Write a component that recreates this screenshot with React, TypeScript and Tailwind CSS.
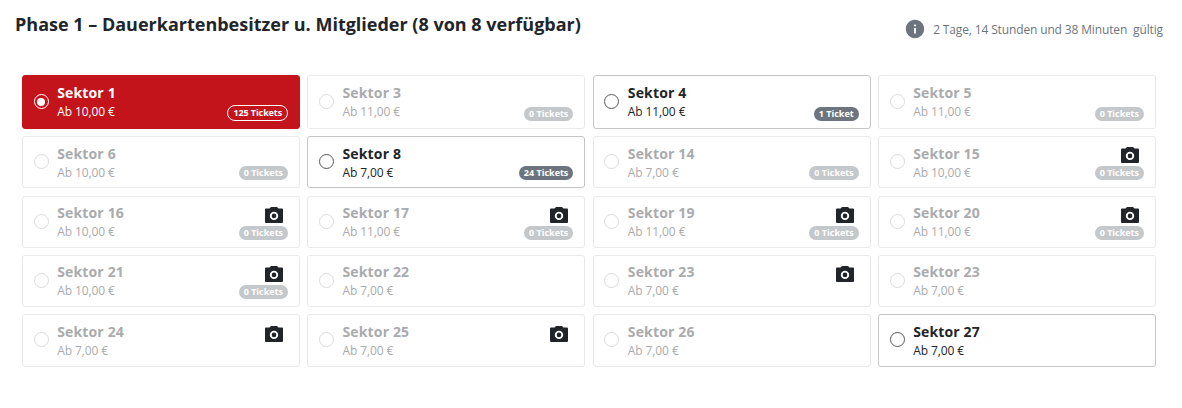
import { MdInfo } from "react-icons/md";
import clsx from "clsx";

type Sector = {
  name: string;
  price: string;
  tickets?: number;
  camera?: boolean;
  available?: boolean;
  selected?: boolean;
};

const SECTORS: Sector[] = [
  { name: "Sektor 1", price: "10,00", tickets: 125, available: true, selected: true },
  { name: "Sektor 3", price: "11,00", tickets: 0 },
  { name: "Sektor 4", price: "11,00", tickets: 1, available: true },
  { name: "Sektor 5", price: "11,00", tickets: 0 },
  { name: "Sektor 6", price: "10,00", tickets: 0 },
  { name: "Sektor 8", price: "7,00", tickets: 24, available: true },
  { name: "Sektor 14", price: "7,00", tickets: 0 },
  { name: "Sektor 15", price: "10,00", tickets: 0, camera: true },
  { name: "Sektor 16", price: "10,00", tickets: 0, camera: true },
  { name: "Sektor 17", price: "11,00", tickets: 0, camera: true },
  { name: "Sektor 19", price: "11,00", tickets: 0, camera: true },
  { name: "Sektor 20", price: "11,00", tickets: 0, camera: true },
  { name: "Sektor 21", price: "10,00", tickets: 0, camera: true },
  { name: "Sektor 22", price: "7,00" },
  { name: "Sektor 23", price: "7,00", camera: true },
  { name: "Sektor 23", price: "7,00" },
  { name: "Sektor 24", price: "7,00", camera: true },
  { name: "Sektor 25", price: "7,00", camera: true },
  { name: "Sektor 26", price: "7,00" },
  { name: "Sektor 27", price: "7,00", available: true },
];

function CameraIcon({ className }: { className?: string }) {
  return (
    <svg viewBox="0 0 18 16" fill="currentColor" className={clsx("h-[16px] w-[18px]", className)}>
      <path
        fillRule="evenodd"
        d="M6 0h6l1.5 1.5H17a1 1 0 0 1 1 1V15a1 1 0 0 1-1 1H1a1 1 0 0 1-1-1V2.5a1 1 0 0 1 1-1h3.5zM9 4.700a4.200 4.200 0 1 0 0 8.400a4.200 4.200 0 0 0 0-8.400z"
      />
      <circle cx="9" cy="8.900" r="2.300" />
    </svg>
  );
}

function Radio({ selected, available }: { selected?: boolean; available?: boolean }) {
  return (
    <span
      className={clsx(
        "mb-px flex size-[15px] shrink-0 items-center justify-center rounded-full border",
        selected ? "border-white" : available ? "border-[#55585b]" : "border-[#dadbdc]",
      )}
    >
      {selected && <span className="size-[8px] rounded-full bg-white" />}
    </span>
  );
}

function SectorCard({ sector }: { sector: Sector }) {
  const { name, price, tickets, camera, available, selected } = sector;
  return (
    <label
      className={clsx(
        "flex items-center rounded-[3px] border pr-[11px] pl-[10.6px]",
        selected
          ? "border-[#c3141c] bg-[#c3141c] text-white"
          : available
            ? "border-[#c4c6c8] text-[#212529]"
            : "border-[#e8e9ea] text-[#a9abad]",
      )}
    >
      <Radio selected={selected} available={available} />
      <span className="ml-[8.6px] flex-1 pt-[0.6px]">
        <span className="block text-[14px] leading-[20px] font-bold tracking-[0.15px]">{name}</span>
        <span className="block text-[12px] leading-[18px] tracking-[-0.1px]">Ab {price} €</span>
      </span>
      <span className="flex h-full flex-col items-end justify-end pb-[7px]">
        {camera && (
          <CameraIcon
            className={clsx("mr-[5px] text-[#212529]", tickets == null ? "mb-[17px]" : "mb-[3px]")}
          />
        )}
        {tickets != null && (
          <span
            className={clsx(
              "rounded-full px-[5px] text-[9px] leading-[14px] font-bold text-white",
              selected
                ? "border border-white tracking-[-0.1px]"
                : available
                  ? "bg-[#6c757d]"
                  : "bg-[#c4c8cb]",
            )}
          >
            {tickets} {tickets === 1 ? "Ticket" : "Tickets"}
          </span>
        )}
      </span>
    </label>
  );
}

export default function App() {
  return (
    <main className="h-[408px] bg-white font-['Open_Sans',sans-serif] text-[#212529]">
      <header className="flex h-[75px] items-start justify-between pr-[19px] pl-[15px]">
        <h1 className="pt-[11px] text-[18px] leading-[26px] font-bold">
          Phase 1 – Dauerkartenbesitzer u. Mitglieder (8 von 8 verfügbar)
        </h1>
        <div className="flex items-center pt-[17px] text-[12px] leading-[22px] tracking-[-0.14px] text-[#6c757d]">
          <MdInfo className="mr-[7px] size-[22px]" />
          <span className="pt-[2px] whitespace-pre">2 Tage, 14 Stunden und 38 Minuten  gültig</span>
        </div>
      </header>
      <section className="mr-[26px] ml-[22px] grid grid-cols-4 grid-rows-[54px_repeat(4,52.2px)] gap-x-[7.3px] gap-y-[7.2px]">
        {SECTORS.map((sector, i) => (
          <SectorCard key={i} sector={sector} />
        ))}
      </section>
    </main>
  );
}
